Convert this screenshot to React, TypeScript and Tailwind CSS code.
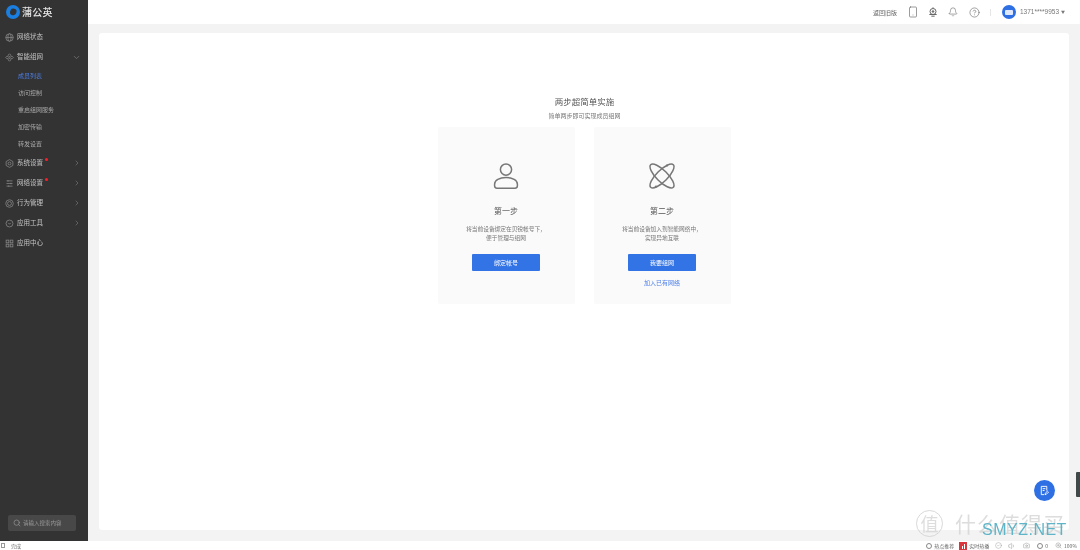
import { Bell, Camera, ChevronDown, ChevronRight, CircleCheck, CircleHelp, Search, Smartphone, Volume1, ZoomIn } from 'lucide-react'

const font = "font-['Noto_Sans_CJK_SC','Noto_Sans',sans-serif]"

function Globe() {
  return (
    <svg width="9" height="9" viewBox="0 0 12 12" fill="none" stroke="#8a8a8a" strokeWidth="1">
      <circle cx="6" cy="6" r="5" />
      <ellipse cx="6" cy="6" rx="2.2" ry="5" />
      <path d="M1 6h10" />
    </svg>
  )
}

function Mesh() {
  return (
    <svg width="9" height="9" viewBox="0 0 12 12" fill="none" stroke="#8a8a8a" strokeWidth="1">
      <path d="M6 1l2 2-2 2-2-2zM6 7l2 2-2 2-2-2zM3 4l2 2-2 2-2-2zM9 4l2 2-2 2-2-2z" />
    </svg>
  )
}

function Gear() {
  return (
    <svg width="9" height="9" viewBox="0 0 12 12" fill="none" stroke="#8a8a8a" strokeWidth="1">
      <path d="M6 .8l4.5 2.6v5.2L6 11.2 1.5 8.6V3.4z" />
      <circle cx="6" cy="6" r="1.9" />
    </svg>
  )
}

function Sliders() {
  return (
    <svg width="9" height="9" viewBox="0 0 12 12" fill="none" stroke="#8a8a8a" strokeWidth="1">
      <path d="M2 2.5h8M2 6h8M2 9.5h8M4 1.5v2M8 5v2M5 8.5v2" />
    </svg>
  )
}

function Behavior() {
  return (
    <svg width="9" height="9" viewBox="0 0 12 12" fill="none" stroke="#8a8a8a" strokeWidth="1">
      <circle cx="6" cy="6" r="5" />
      <circle cx="6" cy="6" r="2.6" />
    </svg>
  )
}

function Tool() {
  return (
    <svg width="9" height="9" viewBox="0 0 12 12" fill="none" stroke="#8a8a8a" strokeWidth="1">
      <circle cx="6" cy="6" r="4.6" />
      <path d="M4.4 5.2L6 7l1.6-1.8" />
    </svg>
  )
}

function Apps() {
  return (
    <svg width="9" height="9" viewBox="0 0 12 12" fill="none" stroke="#8a8a8a" strokeWidth="1">
      <rect x="1.5" y="1.5" width="3.6" height="3.6" />
      <rect x="6.9" y="1.5" width="3.6" height="3.6" />
      <rect x="1.5" y="6.9" width="3.6" height="3.6" />
      <rect x="6.9" y="6.9" width="3.6" height="3.6" />
    </svg>
  )
}

function MenuRow({ icon, label, dot, arrow }: { icon: React.ReactNode; label: string; dot?: boolean; arrow?: 'down' | 'right' }) {
  return (
    <div className="flex h-5 items-center pl-[5px] pr-[7px]">
      <span className="flex w-[9px] justify-center">{icon}</span>
      <span className="relative ml-[3px] text-[6.5px] text-[#c4c4c4]">
        {label}
        {dot && <span className="absolute -right-[5px] top-0 h-[3px] w-[3px] rounded-full bg-[#f5222d]" />}
      </span>
      <span className="ml-auto">
        {arrow === 'down' && <ChevronDown size={9} color="#777" />}
        {arrow === 'right' && <ChevronRight size={8} color="#777" />}
      </span>
    </div>
  )
}

function SubRow({ label, active }: { label: string; active?: boolean }) {
  return (
    <div className={`flex h-[17px] items-center pl-[18px] text-[6px] ${active ? 'text-[#4d7fe8]' : 'text-[#a8a8a8]'}`}>
      {label}
    </div>
  )
}

function Sidebar() {
  return (
    <aside className="flex h-[541px] w-[88px] shrink-0 flex-col bg-[#333333]">
      <div className="flex h-[24px] items-center pl-[6px]">
        <svg width="14" height="14" viewBox="0 0 14 14">
          <circle cx="7" cy="7" r="7" fill="#1a7fe0" />
          <path d="M7.2 3.4c1.4 0 2.6.7 3.3 1.8.4 2.8-1 5-3.7 5-1.6 0-2.8-1-2.8-2.8 0-2.2 1.3-4 3.2-4z" fill="#333333" />
        </svg>
        <span className="mb-[2px] ml-[2px] text-[10px] font-medium tracking-[0.2px] text-[#e2e2e2]">蒲公英</span>
      </div>
      <div className="mt-[3px]">
        <MenuRow icon={<Globe />} label="网络状态" />
        <MenuRow icon={<Mesh />} label="智能组网" arrow="down" />
        <div className="pb-px">
          <SubRow label="成员列表" active />
          <SubRow label="访问控制" />
          <SubRow label="重启组网服务" />
          <SubRow label="加密传输" />
          <SubRow label="转发设置" />
        </div>
        <MenuRow icon={<Gear />} label="系统设置" dot arrow="right" />
        <MenuRow icon={<Sliders />} label="网络设置" dot arrow="right" />
        <MenuRow icon={<Behavior />} label="行为管理" arrow="right" />
        <MenuRow icon={<Tool />} label="应用工具" arrow="right" />
        <MenuRow icon={<Apps />} label="应用中心" />
      </div>
      <div className="mb-[10px] ml-[8px] mt-auto flex h-[16px] w-[68px] items-center rounded-[2px] bg-[#484848] pl-[5px]">
        <Search size={8} color="#999" />
        <span className="ml-[2px] text-[5.5px] text-[#999999]">请输入搜索内容</span>
      </div>
    </aside>
  )
}

function TopBar() {
  return (
    <header className="flex h-[24px] items-center justify-end bg-white pr-[15px] text-[#666666]">
      <span className="text-[6px] text-[#666666]">返回旧版</span>
      <Smartphone size={12} className="ml-[10px]" strokeWidth={1.3} />
      <svg width="10" height="10" viewBox="0 0 12 12" fill="none" stroke="#666" strokeWidth="1.2" className="ml-[9px]">
        <circle cx="6" cy="5.4" r="3.6" />
        <path d="M1.6 9h8.8M4 11h4M6 1.6V.4" />
        <circle cx="6" cy="5.4" r="1" fill="#666" />
      </svg>
      <Bell size={10} className="ml-[10px]" strokeWidth={1.4} />
      <CircleHelp size={11} className="ml-[11px]" strokeWidth={1.3} />
      <span className="ml-[10px] h-[7px] w-px bg-[#e6e6e6]" />
      <span className="ml-[11px] flex h-[14px] w-[14px] items-center justify-center rounded-full bg-[#2f6fe4]">
        <span className="h-[5px] w-[8px] rounded-[1px] bg-white/85" />
      </span>
      <span className="ml-[4px] font-['Liberation_Sans',sans-serif] text-[6.5px] text-[#777777]">1371****9953</span>
      <span className="ml-[2px] text-[4px] text-[#777777]">▼</span>
    </header>
  )
}

function PersonIcon() {
  return (
    <svg width="26" height="26" viewBox="0 0 26 26" fill="none" stroke="#777777" strokeWidth="1.5">
      <circle cx="13" cy="6.6" r="5.6" />
      <path d="M13 14.6c6.6 0 11.4 2.8 11.4 6.6v1.6c0 1.3-1 2.4-2.4 2.4H4c-1.4 0-2.4-1.1-2.4-2.4v-1.6c0-3.8 4.8-6.6 11.4-6.6z" />
    </svg>
  )
}

function AtomIcon() {
  return (
    <svg width="26" height="26" viewBox="0 0 26 26" fill="none" stroke="#777777" strokeWidth="1.5">
      <ellipse cx="13" cy="13" rx="5.6" ry="16" transform="rotate(45 13 13)" />
      <ellipse cx="13" cy="13" rx="5.6" ry="16" transform="rotate(-45 13 13)" />
      <circle cx="18" cy="2.6" r="1.1" fill="#777777" stroke="none" />
      <circle cx="7" cy="23.6" r="1.1" fill="#777777" stroke="none" />
    </svg>
  )
}

function StepCard({ icon, title, lines, button, link }: { icon: React.ReactNode; title: string; lines: string[]; button: string; link?: string }) {
  return (
    <div className="flex h-[177px] w-[137px] flex-col items-center rounded-[2px] bg-[#fafafa] pr-px pt-[36px]">
      {icon}
      <div className="mt-[15px] text-[8px] leading-[14px] text-[#555555]">{title}</div>
      <div className="mt-[6px] text-center text-[5.7px] leading-[9px] text-[#777777]">
        {lines.map((l) => (
          <div key={l}>{l}</div>
        ))}
      </div>
      <button className="mt-[12px] h-[17px] w-[68px] rounded-[1px] bg-[#3273e6] text-[6px] text-white">{button}</button>
      {link && <a className="mt-[7px] text-[6px] leading-[9px] text-[#4d7fe8]">{link}</a>}
    </div>
  )
}

function StatusBar() {
  return (
    <footer className="flex h-[9px] items-center bg-white pl-[1px] pr-[3px] text-[5px] text-[#666666]">
      <span className="h-[5px] w-[4px] border border-[#999999]" />
      <span className="ml-[6px]">完成</span>
      <div className="ml-auto flex items-center gap-[7px]">
        <span className="mr-[-2px] flex items-center gap-[2px]">
          <span className="h-[6px] w-[6px] rounded-full border border-[#888888]" />
          热点推荐
        </span>
        <span className="mr-[-1px] flex items-center gap-[2px]">
          <span className="flex h-[8px] w-[8px] items-end justify-center gap-px bg-[#d9363e] pb-px">
            <span className="h-[3px] w-px bg-white" />
            <span className="h-[5px] w-px bg-white" />
          </span>
          实时热播
        </span>
        <CircleCheck size={7} color="#999" strokeWidth={1.5} className="mr-[-1px]" />
        <Volume1 size={8} color="#999" strokeWidth={1.5} />
        <Camera size={7} color="#888" strokeWidth={1.5} />
        <span className="flex items-center gap-[2px]">
          <span className="h-[6px] w-[6px] rounded-full border border-[#888888]" />0
        </span>
        <span className="flex items-center gap-[2px]">
          <ZoomIn size={7} color="#888" strokeWidth={1.5} />
          100%
        </span>
      </div>
    </footer>
  )
}

export default function App() {
  return (
    <div className={`relative h-[550px] w-[1080px] overflow-hidden bg-white blur-[0.35px] ${font}`}>
      <div className="flex h-[541px]">
        <Sidebar />
        <main className="flex min-w-0 flex-1 flex-col bg-[#f3f3f3]">
          <TopBar />
          <div className="flex-1 px-[11px] pb-[11px] pt-[9px]">
            <section className="flex h-full flex-col items-center rounded-[3px] bg-white pl-[1px] pt-[62px]">
              <h1 className="text-[8.5px] leading-[13px] text-[#555555]">两步超简单实施</h1>
              <p className="mt-[3px] text-[6px] leading-[9px] text-[#777777]">简单两步即可实现成员组网</p>
              <div className="mt-[7px] flex gap-[19px]">
                <StepCard
                  icon={<PersonIcon />}
                  title="第一步"
                  lines={['将当前设备绑定在贝锐帐号下，', '便于管理与组网']}
                  button="绑定帐号"
                />
                <StepCard
                  icon={<AtomIcon />}
                  title="第二步"
                  lines={['将当前设备加入到智能网络中，', '实现异地互联']}
                  button="我要组网"
                  link="加入已有网络"
                />
              </div>
            </section>
          </div>
        </main>
      </div>
      <StatusBar />

      <button className="absolute left-[1034px] top-[480px] flex h-[21px] w-[21px] items-center justify-center rounded-full bg-[#2f6fe4]">
        <svg width="11" height="11" viewBox="0 0 12 12" fill="none" stroke="white" strokeWidth="1">
          <path d="M8.5 6V1.5h-6v9h3" />
          <path d="M4 4h3M4 6h2" />
          <path d="M6.5 10.5l.3-1.4 2.4-2.4 1.1 1.1-2.4 2.4z" />
        </svg>
      </button>
      <div className="absolute left-[1076px] top-[472px] h-[25px] w-[4px] rounded-l-[1px] bg-[#3f4a48]" />

      <div className="pointer-events-none absolute left-[916px] top-[505px] flex h-[36px] items-center text-[#cfcfcf]/70">
        <span className="flex h-[27px] w-[27px] items-center justify-center rounded-full border border-[#cfcfcf]/80 text-[18px] leading-none">值</span>
        <span className="ml-[12px] text-[21px] leading-none tracking-[1px]">什么值得买</span>
      </div>
      <div className="pointer-events-none absolute left-[982px] top-[521px] font-['Liberation_Sans',sans-serif] text-[16px] leading-[18px] tracking-[0.5px] text-[#5fb4c8]">
        SMYZ.NET
      </div>
    </div>
  )
}
